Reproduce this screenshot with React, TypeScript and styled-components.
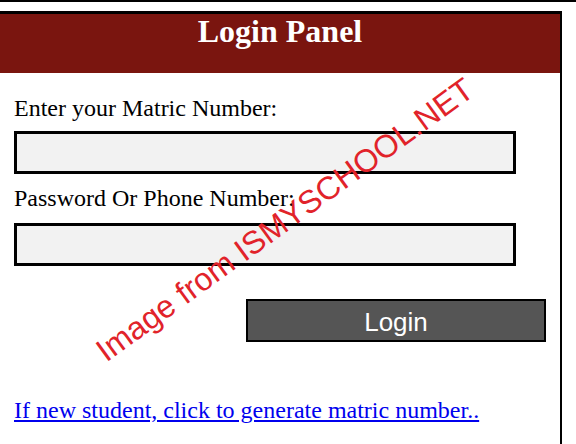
import React from "react";
import styled, { createGlobalStyle } from "styled-components";

const Global = createGlobalStyle`
  html, body { margin: 0; padding: 0; background: #ffffff; }
  body { font-family: "Liberation Serif", "Times New Roman", serif; color: #000; overflow: hidden; }
  * { box-sizing: border-box; }
`;

const Page = styled.div`
  width: 576px;
  height: 444px;
  overflow: hidden;
`;

const TopRule = styled.div`
  height: 2px;
  background: #000;
`;

const Panel = styled.section`
  position: relative;
  margin: 9px 0 0 -2px;
  width: 564px;
  height: 480px;
  border: 2px solid #000;
  border-top-width: 3px;
  border-bottom: none;
`;

const Header = styled.header`
  height: 59px;
  background: #7a150f;
`;

const Title = styled.h1`
  margin: 0;
  font-family: "Liberation Serif", "Times New Roman", serif;
  font-weight: bold;
  font-size: 32px;
  line-height: 35px;
  color: #ffffff;
  text-align: center;
`;

const Form = styled.form`
  display: flex;
  flex-direction: column;
  padding: 0 14px;
`;

const Label = styled.label<{ $top: number }>`
  display: block;
  margin-top: ${(p) => p.$top}px;
  font-size: 24px;
  line-height: 24px;
  color: #000;
`;

const Field = styled.input<{ $top: number }>`
  display: block;
  margin: ${(p) => p.$top}px 0 0 0;
  width: 502px;
  height: 43px;
  border: 3px solid #000;
  background: #f2f2f2;
  padding: 0 8px;
  font-size: 18px;
  outline: none;
`;

const LoginButton = styled.button`
  align-self: flex-end;
  margin-top: 33px;
  width: 300px;
  height: 43px;
  background: #555555;
  border: 2px solid #000;
  color: #ffffff;
  font-family: "Liberation Sans", Arial, sans-serif;
  font-size: 26px;
  line-height: 1;
  padding: 2px 0 0 0;
  cursor: pointer;
`;

const NewStudentLink = styled.a`
  display: block;
  margin-top: 56px;
  font-size: 24px;
  line-height: 24px;
  color: #0000ee;
  text-decoration: underline;
`;

const Watermark = styled.div`
  position: absolute;
  left: 285px;
  top: 206px;
  transform: translate(-50%, -50%) rotate(-36deg);
  font-family: "Liberation Sans", Arial, sans-serif;
  font-size: 32px;
  white-space: nowrap;
  color: #e1232a;
  pointer-events: none;
`;

export default function App() {
  return (
    <Page>
      <Global />
      <TopRule />
      <Panel>
        <Header>
          <Title>Login Panel</Title>
        </Header>
        <Form onSubmit={(e) => e.preventDefault()}>
          <Label $top={23} htmlFor="matric">Enter your Matric Number:</Label>
          <Field $top={11} id="matric" type="text" />
          <Label $top={12} htmlFor="pass">Password Or Phone Number:</Label>
          <Field $top={13} id="pass" type="password" />
          <LoginButton type="submit">Login</LoginButton>
          <NewStudentLink href="#">If new student, click to generate matric number..</NewStudentLink>
        </Form>
        <Watermark>Image from ISMYSCHOOL.NET</Watermark>
      </Panel>
    </Page>
  );
}
